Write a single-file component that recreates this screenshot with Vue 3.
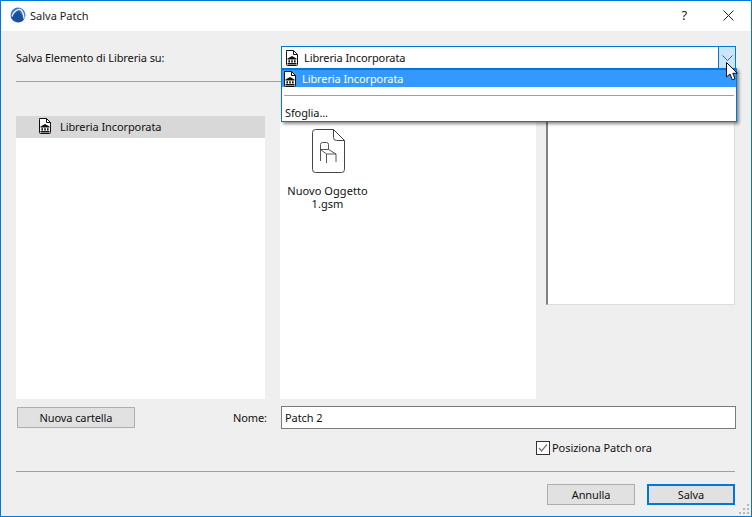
<script setup>
const libIcon = {
  frame: 'M1.5 1.5H8.5L12.5 5.5V15.5Q12.5 16.5 11.5 16.5H2.5Q1.5 16.5 1.5 15.5V2.5Q1.5 1.5 2.5 1.5Z',
  fold: 'M8.5 1.5V5.5H12.5',
  temple: 'M2.5 9.6 7 7 11.5 9.6V10.6H2.5ZM3.4 11.2H5V13.6H3.4ZM6.2 11.2H7.8V13.6H6.2ZM9 11.2H10.6V13.6H9ZM2.5 14H11.5V15.4H2.5Z'
}
</script>

<template>
  <div class="window">
    <header class="titlebar">
      <svg class="logo" width="16" height="16" viewBox="0 0 16 16">
        <circle cx="8" cy="8" r="7.5" fill="#3b7dd6" />
        <path d="M1 10.5C2.5 6.5 6 4 9 4C11 6 12.5 9 13.5 13C11 16 5 16.5 1 10.5Z" fill="#1c4f9c" />
        <path d="M2 9.5C3.5 4.5 7.5 2 10.5 2.5C12.8 4.5 13.8 7.5 14 11.5" fill="none" stroke="#fff" stroke-width="1.2" />
      </svg>
      <span class="title">Salva Patch</span>
      <span class="help">?</span>
      <svg class="close" width="11" height="11" viewBox="0 0 11 11">
        <path d="M.5.5 10.5 10.5M10.5.5.5 10.5" stroke="#222" stroke-width="1" fill="none" />
      </svg>
    </header>

    <main class="body">
      <div class="top-row">
        <span class="top-label">Salva Elemento di Libreria su:</span>
        <div class="select">
          <svg class="lib" width="14" height="18" viewBox="0 0 14 18">
            <path :d="libIcon.frame" fill="#fff" stroke="#111" />
            <path :d="libIcon.fold" fill="none" stroke="#111" />
            <path :d="libIcon.temple" fill="#111" />
          </svg>
          <span>Libreria Incorporata</span>
          <div class="select-btn">
            <svg width="11" height="6" viewBox="0 0 11 6">
              <path d="M.5.5 5.5 5.5 10.5.5" fill="none" stroke="#44607a" />
            </svg>
          </div>
        </div>
      </div>
      <div class="rule top-rule"></div>

      <div class="panels">
        <div class="tree">
          <div class="tree-row">
            <svg class="lib" width="14" height="18" viewBox="0 0 14 18">
              <path :d="libIcon.frame" fill="#fff" stroke="#111" />
              <path :d="libIcon.fold" fill="none" stroke="#111" />
              <path :d="libIcon.temple" fill="#111" />
            </svg>
            <span>Libreria Incorporata</span>
          </div>
        </div>
        <div class="files">
          <div class="file-item">
            <svg class="file-icon" width="33" height="44" viewBox="0 0 33 44">
              <path d="M3.5.5H21.5L32.5 11.5V40.5Q32.5 43.5 29.5 43.5H3.5Q.5 43.5 .5 40.5V3.5Q.5 .5 3.5 .5Z" fill="#fff" stroke="#444" />
              <path d="M21.5.5V8.5Q21.5 11.5 24.5 11.5H32.5" fill="none" stroke="#444" />
              <path d="M8.5 32V15.5Q8.5 13.5 10.5 13.5H14.5Q16.5 13.5 16.5 15.5V20.5M8.5 20.5H16.5L24 25H14.5L8.5 20.5M14.5 25V34M24 25V33" fill="none" stroke="#444" stroke-width=".9" />
            </svg>
            <div class="file-name">Nuovo Oggetto<br />1.gsm</div>
          </div>
        </div>
        <div class="preview"></div>
      </div>

      <div class="name-row">
        <button class="btn new-folder">Nuova cartella</button>
        <label class="name-label">Nome:</label>
        <div class="name-input">Patch 2</div>
      </div>

      <div class="check-row">
        <svg width="14" height="14" viewBox="0 0 14 14">
          <rect x=".5" y=".5" width="13" height="13" fill="#fff" stroke="#333" />
          <path d="M3 7 5.5 10 11 3.5" fill="none" stroke="#777" stroke-width="1.3" />
        </svg>
        <span class="check-text">Posiziona Patch ora</span>
      </div>

      <div class="rule bottom-rule"></div>

      <div class="actions">
        <button class="btn action">Annulla</button>
        <button class="btn action primary">Salva</button>
      </div>
    </main>

    <div class="dropdown">
      <div class="option">
        <svg class="lib" width="14" height="18" viewBox="0 0 14 18">
          <path :d="libIcon.frame" fill="#fff" stroke="#111" />
          <path :d="libIcon.fold" fill="none" stroke="#111" />
          <path :d="libIcon.temple" fill="#111" />
        </svg>
        <span>Libreria Incorporata</span>
      </div>
      <div class="separator"></div>
      <div class="browse">Sfoglia...</div>
    </div>

    <svg class="cursor" width="13" height="19" viewBox="0 0 13 19">
      <path d="M.5.5V15L4 12 6.3 17.8 9 16.8 6.8 11.3H11.3Z" fill="#fff" stroke="#111" />
    </svg>

    <svg class="grip" width="11" height="11" viewBox="0 0 11 11" fill="#b8b8b8">
      <rect x="8" y="0" width="2" height="2" />
      <rect x="4" y="4" width="2" height="2" />
      <rect x="8" y="4" width="2" height="2" />
      <rect x="0" y="8" width="2" height="2" />
      <rect x="4" y="8" width="2" height="2" />
      <rect x="8" y="8" width="2" height="2" />
    </svg>
  </div>
</template>

<style>
html, body { margin: 0; overflow: hidden; }
</style>

<style scoped>
.window {
  position: relative;
  box-sizing: border-box;
  width: 752px;
  height: 517px;
  border: 1px solid #0078d7;
  background: #efefef;
  font-family: "Noto Sans", sans-serif;
  font-size: 11px;
  letter-spacing: -0.1px;
  color: #111;
  overflow: hidden;
}
.titlebar {
  height: 30px;
  box-sizing: border-box;
  padding: 0 0 2px 9px;
  background: #fff;
  display: flex;
  align-items: center;
}
.logo { flex: none; }
.title { margin-left: 4px; font-size: 11px; letter-spacing: 0; color: #222; }
.help { margin-left: auto; font-size: 13px; color: #222; }
.close { margin: 0 17px 0 36px; }
.body { padding: 0 15px; }
.top-row {
  display: flex;
  align-items: center;
  height: 23px;
  margin-top: 15px;
}
.top-label { width: 265px; flex: none; }
.select {
  flex: 1;
  height: 23px;
  box-sizing: border-box;
  border: 1px solid #0078d7;
  background: #fff;
  display: flex;
  align-items: center;
  padding-left: 3px;
  gap: 5px;
}
.select-btn {
  margin-left: auto;
  width: 16px;
  height: 21px;
  background: #cce4f7;
  border-left: 1px solid #0078d7;
  display: flex;
  align-items: center;
  justify-content: center;
}
.rule { height: 1px; background: #a0a0a0; }
.top-rule { margin-top: 12px; width: 719px; }
.panels {
  display: flex;
  align-items: flex-start;
  margin-top: 34px;
  height: 283px;
}
.tree { width: 249px; height: 100%; background: #fff; flex: none; }
.tree-row {
  height: 22px;
  box-sizing: border-box;
  padding: 0 0 2px 22px;
  background: #d8d8d8;
  display: flex;
  align-items: center;
  gap: 8px;
}
.files {
  width: 256px;
  height: 100%;
  margin-left: 15px;
  padding-top: 13px;
  box-sizing: border-box;
  background: #fff;
  flex: none;
}
.file-item {
  width: 95px;
  display: flex;
  flex-direction: column;
  align-items: center;
}
.file-icon { margin-left: 2px; }
.file-name {
  text-align: center;
  line-height: 13px;
  margin-top: 11px;
  letter-spacing: 0.05px;
  white-space: nowrap;
}
.preview {
  width: 189px;
  height: 189px;
  margin-left: 10px;
  box-sizing: border-box;
  background: #fff;
  border: 1px solid #dcdcdc;
  border-left: 2px solid #808080;
  border-top: 0;
  flex: none;
}
.name-row {
  display: flex;
  align-items: center;
  height: 23px;
  margin-top: 7px;
}
.btn {
  font: inherit;
  letter-spacing: inherit;
  color: #111;
  background: #e1e1e1;
  border: 1px solid #adadad;
  padding: 0;
  height: 21px;
  box-sizing: border-box;
}
.new-folder { width: 118px; margin-left: 1px; }
.name-label { margin-left: 98px; width: 48px; flex: none; }
.name-input {
  flex: 1;
  height: 23px;
  box-sizing: border-box;
  border: 1px solid #7a7a7a;
  background: #fff;
  line-height: 21px;
  padding-left: 3px;
}
.check-row {
  display: flex;
  align-items: center;
  gap: 2px;
  margin-top: 11px;
  margin-left: 520px;
  height: 15px;
}
.check-text { letter-spacing: -0.05px; }
.bottom-rule { margin-top: 16px; width: 719px; }
.actions {
  display: flex;
  justify-content: flex-end;
  gap: 12px;
  margin-top: 12px;
  padding-right: 1px;
}
.action { width: 88px; }
.primary { border: 2px solid #0078d7; }
.dropdown {
  position: absolute;
  left: 280px;
  top: 67px;
  width: 456px;
  height: 54px;
  box-sizing: border-box;
  border: 1px solid #0078d7;
  border-top-width: 2px;
  background: #fff;
  box-shadow: 2px 2px 3px rgba(0, 0, 0, .45);
}
.option {
  height: 17px;
  background: #3399ff;
  color: #fff;
  display: flex;
  align-items: center;
  padding-left: 1px;
  gap: 5px;
}
.separator { height: 1px; background: #a0a0a0; margin: 8px 2px 0; }
.browse { margin: 9px 0 0 3px; line-height: 15px; }
.cursor { position: absolute; left: 725px; top: 61px; }
.grip { position: absolute; right: 1px; bottom: 1px; }
</style>
